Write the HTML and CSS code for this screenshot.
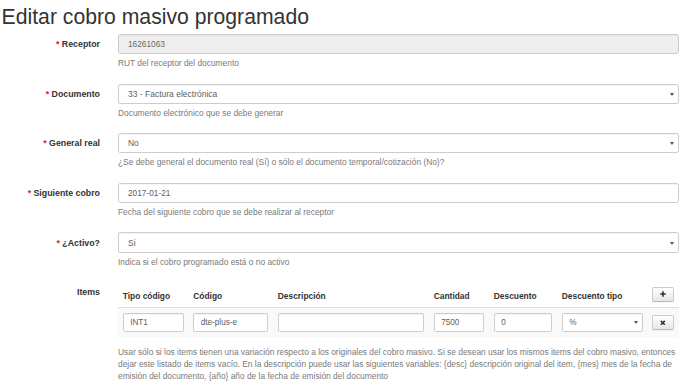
FILE: index.html
```html
<!DOCTYPE html>
<html lang="es">
<head>
<meta charset="utf-8">
<title>Editar cobro masivo programado</title>
<link rel="stylesheet" href="styles.css">
</head>
<body>
<div class="page">
  <h1 class="title">Editar cobro masivo programado</h1>
  <form class="form">
    <div class="row">
      <label class="lbl"><span class="req">*</span> Receptor</label>
      <div class="ctl">
        <input class="field field-disabled" value="16261063" disabled>
        <p class="help">RUT del receptor del documento</p>
      </div>
    </div>
    <div class="row">
      <label class="lbl"><span class="req">*</span> Documento</label>
      <div class="ctl">
        <div class="select-wrap"><select class="field"><option>33 - Factura electrónica</option></select></div>
        <p class="help">Documento electrónico que se debe generar</p>
      </div>
    </div>
    <div class="row">
      <label class="lbl"><span class="req">*</span> General real</label>
      <div class="ctl">
        <div class="select-wrap"><select class="field"><option>No</option></select></div>
        <p class="help">¿Se debe general el documento real (Sí) o sólo el documento temporal/cotización (No)?</p>
      </div>
    </div>
    <div class="row">
      <label class="lbl"><span class="req">*</span> Siguiente cobro</label>
      <div class="ctl">
        <input class="field" value="2017-01-21">
        <p class="help">Fecha del siguiente cobro que se debe realizar al receptor</p>
      </div>
    </div>
    <div class="row">
      <label class="lbl"><span class="req">*</span> ¿Activo?</label>
      <div class="ctl">
        <div class="select-wrap"><select class="field"><option>Si</option></select></div>
        <p class="help">Indica si el cobro programado está o no activo</p>
      </div>
    </div>
    <div class="row">
      <label class="lbl">Items</label>
      <div class="ctl">
        <table class="items">
          <thead>
            <tr>
              <th class="c1">Tipo código</th>
              <th class="c2">Código</th>
              <th class="c3">Descripción</th>
              <th class="c4">Cantidad</th>
              <th class="c5">Descuento</th>
              <th class="c6">Descuento tipo</th>
              <th class="c7"><button type="button" class="btn" aria-label="Agregar"><svg class="ico" width="6" height="6" viewBox="0 0 10 10"><path d="M5 0.5V9.5M0.5 5H9.5" stroke="#333" stroke-width="2.6" fill="none"/></svg></button></th>
            </tr>
          </thead>
          <tbody>
            <tr>
              <td><input class="field-sm" value="INT1"></td>
              <td><input class="field-sm" value="dte-plus-e"></td>
              <td><input class="field-sm" value=""></td>
              <td><input class="field-sm" value="7500"></td>
              <td><input class="field-sm" value="0"></td>
              <td><div class="select-wrap select-sm"><select class="field-sm"><option>%</option></select></div></td>
              <td><button type="button" class="btn" aria-label="Eliminar"><svg class="ico" width="5.6" height="5.6" viewBox="0 0 10 10"><path d="M1.5 1.5L8.5 8.5M8.5 1.5L1.5 8.5" stroke="#333" stroke-width="2.8" fill="none"/></svg></button></td>
            </tr>
          </tbody>
        </table>
        <p class="help">Usar sólo si los items tienen una variación respecto a los originales del cobro masivo. Si se desean usar los mismos items del cobro masivo, entonces<br>dejar este listado de items vacío. En la descripción puede usar las siguientes variables: {desc} descripción original del item, {mes} mes de la fecha de<br>emisión del documento, {año} año de la fecha de emisión del documento</p>
      </div>
    </div>
  </form>
</div>
</body>
</html>
```

FILE: styles.css
```css
html, body {
  margin: 0;
  padding: 0;
  background: #fff;
}

body {
  font-family: "Liberation Sans", Arial, Helvetica, sans-serif;
  font-size: 8.4px;
  line-height: 12px;
  color: #333;
}

.page {
  padding-left: 1.6px;
}

.title {
  font-size: 21.2px;
  font-weight: 400;
  line-height: 1.1;
  margin: 4.8px 0 6px 0;
  color: #333;
}

.form {
  margin: 0;
  padding-right: 11px;
}

.row {
  display: grid;
  grid-template-columns: 98.4px 1fr;
  column-gap: 18px;
  margin-bottom: 8.4px;
}

.lbl {
  text-align: right;
  font-weight: 700;
  font-size: 8.8px;
  padding-top: 4.2px;
  line-height: 12px;
  white-space: nowrap;
}

.req {
  color: #e3211c;
  font-weight: 700;
}

.ctl {
  min-width: 0;
}

.field {
  display: block;
  box-sizing: border-box;
  width: 100%;
  height: 20.2px;
  margin: 0;
  padding: 0 9px;
  border: 1px solid #ccc;
  border-radius: 2.4px;
  background: #fff;
  box-shadow: inset 0 0.6px 0.6px rgba(0, 0, 0, 0.075);
  font-family: inherit;
  font-size: 8.3px;
  color: #606060;
  outline: none;
}

.field-disabled {
  background: #eee;
  color: #6a6a6a;
  -webkit-text-fill-color: #6a6a6a;
  opacity: 1;
}

select.field,
select.field-sm {
  -webkit-appearance: none;
  appearance: none;
}

select.field {
  font-size: 8.5px;
}

.select-wrap {
  position: relative;
}

.select-wrap::after {
  content: "";
  position: absolute;
  right: 5px;
  top: 50%;
  margin-top: -1px;
  border-left: 2px solid transparent;
  border-right: 2px solid transparent;
  border-top: 3px solid #555;
}

.select-sm::after {
  right: 4.5px;
}

.help {
  margin: 3px 0 6px 0;
  color: #7a7a7a;
  font-size: 8.4px;
  line-height: 12px;
}

.items {
  width: 100%;
  table-layout: fixed;
  border-collapse: collapse;
  border-spacing: 0;
  margin-bottom: 9.6px;
}

.items th {
  text-align: left;
  vertical-align: bottom;
  font-weight: 700;
  font-size: 8.4px;
  line-height: 12px;
  padding: 4.8px;
  border-bottom: 1.4px solid #ddd;
  white-space: nowrap;
}

.items td {
  padding: 5.2px 4.8px 4.8px 4.8px;
  vertical-align: middle;
  background: #f9f9f9;
}

.c1 { width: 60.9px; }
.c2 { width: 74.9px; }
.c3 { width: 146.4px; }
.c4 { width: 50.4px; }
.c5 { width: 58.4px; }
.c6 { width: 80.9px; }
.c7 { width: 21.9px; }

.field-sm {
  display: block;
  box-sizing: border-box;
  width: 100%;
  height: 18.6px;
  margin: 0;
  padding: 0 6.4px;
  border: 1px solid #ccc;
  border-radius: 1.8px;
  background: #fff;
  box-shadow: inset 0 0.6px 0.6px rgba(0, 0, 0, 0.075);
  font-family: inherit;
  font-size: 8.2px;
  color: #606060;
  outline: none;
}

.btn {
  display: flex;
  align-items: center;
  justify-content: center;
  box-sizing: border-box;
  width: 21.6px;
  height: 15.4px;
  margin: 0;
  padding: 0;
  border: 1px solid #ccc;
  border-bottom-color: #bbb;
  border-radius: 1.8px;
  background: linear-gradient(to bottom, #fff 0%, #e6e6e6 100%);
  box-shadow: inset 0 0.6px 0 rgba(255, 255, 255, 0.15), 0 0.6px 0.6px rgba(0, 0, 0, 0.075);
  cursor: pointer;
}

.ico {
  display: block;
}
```
